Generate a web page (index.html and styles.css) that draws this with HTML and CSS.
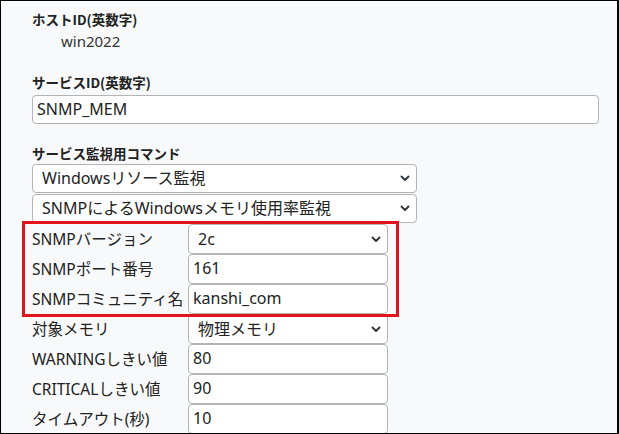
FILE: index.html
```html
<!DOCTYPE html>
<html lang="ja">
<head>
<meta charset="utf-8">
<link rel="stylesheet" href="styles.css">
</head>
<body>
<div class="frame">
  <div class="field f1">
    <div class="head">ホストID(英数字)</div>
    <div class="static">win2022</div>
  </div>
  <div class="field f2">
    <div class="head">サービスID(英数字)</div>
    <div class="box wide">SNMP_MEM</div>
  </div>
  <div class="field f3">
    <div class="head">サービス監視用コマンド</div>
    <div class="box sel mid"><span>Windowsリソース監視</span><svg class="chev" viewBox="0 0 10 7"><polyline points="1.5,1.5 5,5 8.5,1.5"/></svg></div>
    <div class="box sel mid"><span>SNMPによるWindowsメモリ使用率監視</span><svg class="chev" viewBox="0 0 10 7"><polyline points="1.5,1.5 5,5 8.5,1.5"/></svg></div>
    <div class="rows">
      <div class="row"><div class="lbl">SNMPバージョン</div><div class="box sel small"><span>2c</span><svg class="chev" viewBox="0 0 10 7"><polyline points="1.5,1.5 5,5 8.5,1.5"/></svg></div></div>
      <div class="row"><div class="lbl">SNMPポート番号</div><div class="box small">161</div></div>
      <div class="row"><div class="lbl">SNMPコミュニティ名</div><div class="box small">kanshi_com</div></div>
      <div class="row"><div class="lbl">対象メモリ</div><div class="box sel small"><span>物理メモリ</span><svg class="chev" viewBox="0 0 10 7"><polyline points="1.5,1.5 5,5 8.5,1.5"/></svg></div></div>
      <div class="row"><div class="lbl">WARNINGしきい値</div><div class="box small">80</div></div>
      <div class="row"><div class="lbl">CRITICALしきい値</div><div class="box small">90</div></div>
      <div class="row"><div class="lbl">タイムアウト(秒)</div><div class="box small">10</div></div>
      <div class="highlight"></div>
    </div>
  </div>
</div>
</body>
</html>
```
FILE: styles.css
```css
html, body {
  margin: 0;
  padding: 0;
}
body {
  width: 619px;
  height: 434px;
  overflow: hidden;
  font-family: "Noto Sans", "Noto Sans CJK JP", sans-serif;
  color: #212529;
}
.frame {
  box-sizing: border-box;
  width: 619px;
  height: 434px;
  border: 1px solid #000;
  border-right-width: 2px;
  background: #f8f9fa;
  padding: 9px 0 0 31px;
  overflow: hidden;
}
.head {
  font-family: "Noto Sans CJK JP", sans-serif;
  font-weight: 700;
  font-size: 13.5px;
  line-height: 18px;
  color: #222;
}
.static {
  font-size: 15px;
  line-height: 20px;
  padding: 3px 0 0 29px;
  color: #333;
  height: 24px;
}
.f2 { margin-top: 18px; }
.f2 .head + .box { margin-top: 4px; }
.f3 { margin-top: 20px; }
.f3 .head + .box { margin-top: 2px; }
.box {
  box-sizing: border-box;
  height: 29px;
  border: 1px solid #b4b4b4;
  border-radius: 4px;
  background: #fff;
  font-size: 16px;
  line-height: 27px;
  padding: 0 6px 0 4px;
  white-space: nowrap;
  color: #222;
}
.box.sel {
  display: flex;
  align-items: center;
  justify-content: space-between;
  padding: 0 6px 0 9px;
}
.wide { width: 567px; }
.mid { width: 385px; margin-bottom: 1px; }
.small { width: 200px; }
.chev {
  width: 10px;
  height: 7px;
  fill: none;
  stroke: #343a40;
  stroke-width: 2;
  stroke-linecap: round;
  stroke-linejoin: round;
}
.rows {
  position: relative;
}
.row {
  display: flex;
  align-items: center;
  height: 30px;
}
.row .box { height: 30px; }
.lbl {
  width: 156px;
  flex: none;
  font-size: 15.5px;
  line-height: 20px;
  white-space: nowrap;
  color: #222;
}
.highlight {
  position: absolute;
  left: -10px;
  top: -3px;
  width: 377px;
  height: 96px;
  box-sizing: border-box;
  border: 3px solid #e3131b;
}
```
